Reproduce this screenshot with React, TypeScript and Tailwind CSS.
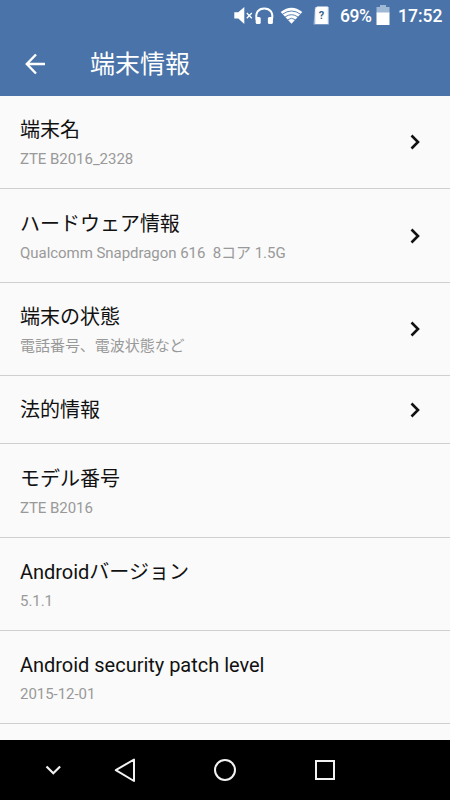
import React from 'react';

const items = [
  { title: '端末名', summary: 'ZTE B2016_2328', arrow: true, height: 'h-[93px]' },
  { title: 'ハードウェア情報', summary: 'Qualcomm Snapdragon 616  8コア 1.5G', arrow: true, height: 'h-[94px]' },
  { title: '端末の状態', summary: '電話番号、電波状態など', arrow: true, height: 'h-[93px]' },
  { title: '法的情報', arrow: true, height: 'h-[68px]' },
  { title: 'モデル番号', summary: 'ZTE B2016', height: 'h-[94px]' },
  { title: 'Androidバージョン', summary: '5.1.1', height: 'h-[93px]' },
  { title: 'Android security patch level', summary: '2015-12-01', height: 'h-[93px]' },
];

const StatusBar = () => (
  <div className="flex h-8 items-center pl-[233px] text-white">
    <svg className="h-8 w-[104px] shrink-0" viewBox="0 0 104 32" fill="none">
      {/* muted speaker */}
      <path d="M1.300 12.300h4l6-5.300v17l-6-5.500h-4z" fill="currentColor" />
      <path d="M13.800 13l5 5.200M18.800 13l-5 5.200" stroke="currentColor" strokeWidth="1.300" />
      {/* headphones */}
      <path d="M23.700 20C22 12.500 25.500 8.500 31.300 8.500S40.600 12.500 38.900 20" stroke="currentColor" strokeWidth="2" />
      <rect x="22.700" y="17" width="5" height="7" rx="1.500" fill="currentColor" />
      <rect x="34.900" y="17" width="5" height="7" rx="1.500" fill="currentColor" />
      {/* wifi */}
      <path d="M47.700 12Q58.500 3.500 69.300 12L58.500 23.800z" fill="currentColor" />
      <path
        d="M49.500 14.200Q58.500 7.800 67.500 14.200M52 17Q58.500 12.400 65 17M54.500 19.800Q58.500 16.800 62.500 19.800"
        stroke="#4a74a9"
        strokeWidth="0.900"
      />
      {/* unknown SIM */}
      <path d="M82 7h14v17.500H80.500z" fill="#9fb8d5" />
      <path d="M84 6.500h10.800V24H82.300V9z" fill="currentColor" />
      <text x="88.600" y="19" textAnchor="middle" className="fill-[#3b5f8c] font-[Roboto] text-[11px] font-bold">?</text>
    </svg>
    <span className="ml-[3px] w-9 text-[17.500px] leading-8 font-medium tracking-[-0.4px]">69%</span>
    <svg className="h-8 w-[14px] shrink-0" viewBox="0 0 14 32">
      <path d="M4 5h6v2h3.500v6H.5V7H4z" fill="#9fb8d5" />
      <path d="M.5 12.500h13V25H.5z" fill="currentColor" />
    </svg>
    <span className="ml-2 text-[17.500px] leading-8 font-medium">17:52</span>
  </div>
);

const Header = () => (
  <header className="h-24 shrink-0 bg-[#4a74a9] text-white">
    <StatusBar />
    <div className="flex h-16 items-center pl-[25px]">
      <svg className="h-[22px] w-[21px]" viewBox="0 0 21 22" fill="none" stroke="currentColor" strokeWidth="2.400">
        <path d="M11 1.500L1.800 11l9.200 9.500M1.800 11H20" />
      </svg>
      <h1 className="ml-11 pt-0.5 text-[25px] leading-8">端末情報</h1>
    </div>
  </header>
);

const Chevron = () => (
  <svg className="h-4 w-[11px]" viewBox="0 0 11 16" fill="none" stroke="#111" strokeWidth="2.600">
    <path d="M1.500 1.500L8 8l-6.500 6.500" />
  </svg>
);

const NavBar = () => (
  <nav className="h-[60px] shrink-0 bg-black">
    <svg className="h-[60px] w-full" viewBox="0 0 450 60" fill="none" stroke="#f2f2f2" strokeWidth="2">
      <path d="M46.500 26.500l6.800 6.800 6.800-6.800" strokeWidth="2.200" />
      <path d="M134 19.500v21.500l-18.200-10.800z" strokeLinejoin="round" />
      <circle cx="225" cy="30" r="10" />
      <rect x="316" y="21" width="18" height="18" />
    </svg>
  </nav>
);

const App = () => {
  return (
    <div className="flex h-[800px] w-[450px] flex-col overflow-hidden bg-[#fafafa] font-[Roboto,'Noto_Sans_CJK_JP',sans-serif]">
      <Header />
      <main className="min-h-0 flex-1 overflow-hidden">
        {items.map((item) => (
          <div
            key={item.title}
            className={`flex items-center justify-between border-b border-[#cfcfcf] pr-[29px] pl-5 ${item.height}`}
          >
            <div>
              <div className="pt-px text-[20px] leading-8 tracking-[-0.02px] text-[#111]">{item.title}</div>
              {item.summary && (
                <div className="mt-px text-[15px] leading-6 tracking-[-0.04px] whitespace-pre text-[#999]">
                  {item.summary}
                </div>
              )}
            </div>
            {item.arrow && <Chevron />}
          </div>
        ))}
      </main>
      <NavBar />
    </div>
  );
};

export default App;
